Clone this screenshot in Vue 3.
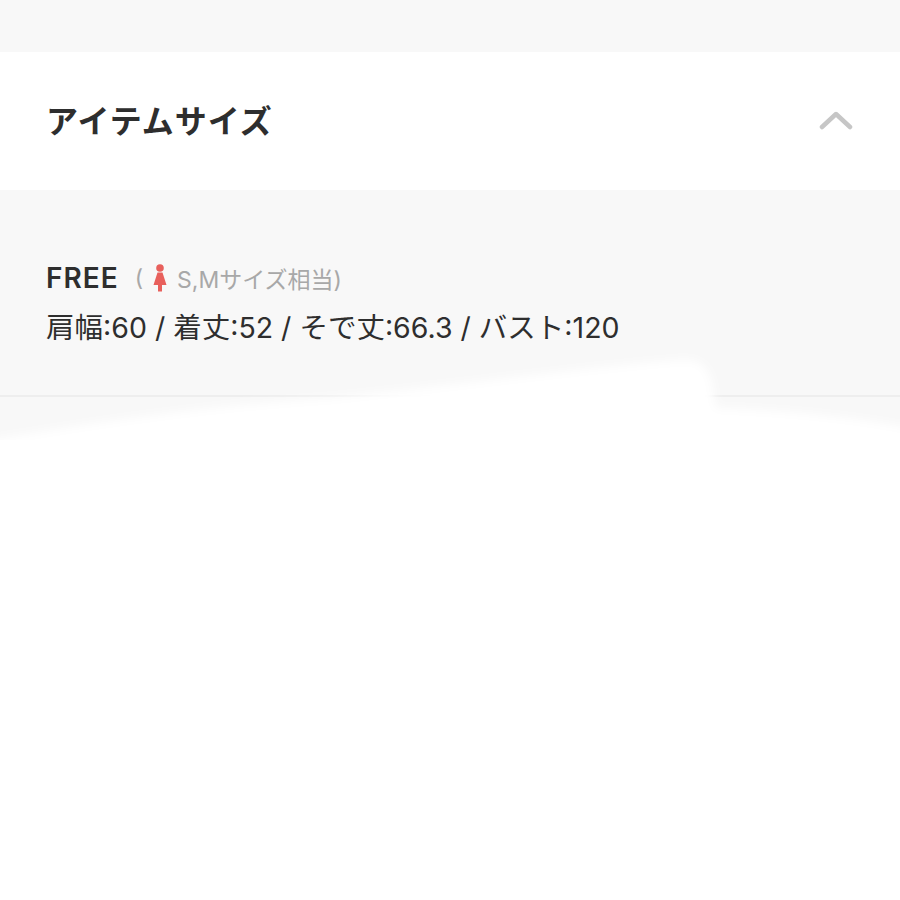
<template>
  <div class="page">
    <div class="top-gap"></div>
    <header class="head">
      <h2 class="title">アイテムサイズ</h2>
      <svg class="chevron" width="36" height="22" viewBox="0 0 36 22">
        <path d="M5 17 L19 4 L33 17" fill="none" stroke="#c6c6c6" stroke-width="4.5" stroke-linecap="round" stroke-linejoin="round" />
      </svg>
    </header>
    <section class="sizes">
      <div class="size-row">
        <span class="size-name">FREE</span>
        <span class="size-note">
          <span class="paren">(</span>
          <svg class="woman" width="16" height="28" viewBox="0 0 16 28">
            <circle cx="8" cy="4" r="3.8" fill="#e8605c" />
            <path d="M5.5 8.5 H10.5 L14.5 21 H10 V27.5 H6 V21 H1.5 Z" fill="#e8605c" />
          </svg>
          <span class="note-text">S,Mサイズ相当)</span>
        </span>
      </div>
      <p class="size-detail">肩幅:60 / 着丈:52 / そで丈:66.3 / バスト:120</p>
    </section>
    <div class="below"></div>
    <svg class="smudge" width="900" height="120" viewBox="0 0 900 120">
      <defs>
        <filter id="soft" x="-5%" y="-20%" width="110%" height="140%">
          <feGaussianBlur stdDeviation="5" />
        </filter>
      </defs>
      <path d="M-20 100 C120 76 230 62 330 56 C450 44 580 26 680 18 C702 16 712 26 714 56 L716 66 C780 68 850 74 920 88 V124 H-20 Z" fill="#fff" filter="url(#soft)" />
    </svg>
  </div>
</template>

<script setup>
</script>

<style>
html, body { background: #fff; }
</style>

<style scoped>
.page {
  position: relative;
  width: 900px;
  height: 900px;
  overflow: hidden;
  background: #fff;
  font-family: Inter, "Noto Sans CJK JP", sans-serif;
  color: #2e2e2e;
}
.top-gap { height: 52px; background: #f8f8f8; }
.head {
  height: 138px;
  box-sizing: border-box;
  padding: 0 47px 4px 46px;
  display: flex;
  align-items: center;
  justify-content: space-between;
  background: #fff;
}
.chevron { margin-top: 4px; }
.title {
  margin: 0;
  font-size: 32px;
  font-weight: 700;
  letter-spacing: 1px;
  font-family: "Noto Sans CJK JP", sans-serif;
}
.sizes {
  height: 207px;
  box-sizing: border-box;
  padding: 70px 46px 0;
  background: #f8f8f8;
  border-bottom: 2px solid #eeeeee;
}
.size-row { display: flex; align-items: center; gap: 16px; height: 36px; }
.size-name { font-size: 28px; font-weight: 600; letter-spacing: 1px; }
.size-note {
  display: flex;
  align-items: center;
  gap: 9px;
  font-size: 23px;
  color: #a8a8a8;
}
.woman { flex: none; }
.size-detail {
  margin: 14px 0 0;
  font-size: 28.5px;
  line-height: 36px;
  white-space: nowrap;
}
.below { height: 43px; background: #f8f8f8; }
.smudge {
  position: absolute;
  left: 0;
  top: 342px;
}
</style>
